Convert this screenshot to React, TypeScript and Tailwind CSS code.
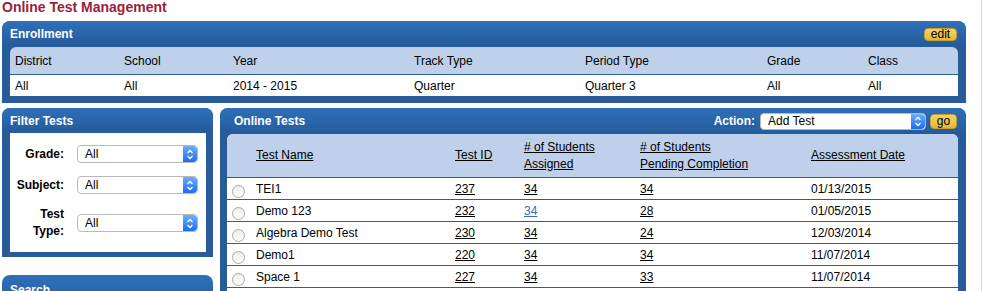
import React from "react";

const ENROLLMENT = [
  { label: "District", value: "All" },
  { label: "School", value: "All" },
  { label: "Year", value: "2014 - 2015" },
  { label: "Track Type", value: "Quarter" },
  { label: "Period Type", value: "Quarter 3" },
  { label: "Grade", value: "All" },
  { label: "Class", value: "All" },
];

const TESTS = [
  { name: "TEI1", id: "237", assigned: "34", pending: "34", date: "01/13/2015" },
  { name: "Demo 123", id: "232", assigned: "34", pending: "28", date: "01/05/2015", visited: true },
  { name: "Algebra Demo Test", id: "230", assigned: "34", pending: "24", date: "12/03/2014" },
  { name: "Demo1", id: "220", assigned: "34", pending: "34", date: "11/07/2014" },
  { name: "Space 1", id: "227", assigned: "34", pending: "33", date: "11/07/2014" },
];

function Stepper() {
  return (
    <div className="flex w-[14px] shrink-0 items-center justify-center rounded-r-[4px] bg-gradient-to-b from-[#6aaefa] to-[#1c6cf0]">
      <svg width="8" height="11" viewBox="0 0 8 11" fill="none">
        <path d="M1.5 4 L4 1.5 L6.5 4" stroke="white" strokeWidth="1.3" />
        <path d="M1.5 7 L4 9.5 L6.5 7" stroke="white" strokeWidth="1.3" />
      </svg>
    </div>
  );
}

function FakeSelect({ value, className }: { value: string; className: string }) {
  return (
    <div className={`flex overflow-hidden rounded-[4px] border border-[#b9b9b9] bg-white ${className}`}>
      <span className="flex flex-1 items-center pl-[7px] text-[12px] leading-none text-black">{value}</span>
      <Stepper />
    </div>
  );
}

function GoldButton({ label, className }: { label: string; className: string }) {
  return (
    <button
      className={`flex items-center justify-center rounded-[4px] border border-[#c99e2b] bg-gradient-to-b from-[#f3d566] to-[#e2b83a] text-[12px] leading-none text-black ${className}`}
    >
      {label}
    </button>
  );
}

function Radio() {
  return (
    <span className="mb-[1px] ml-[5px] block h-[13px] w-[13px] self-end rounded-full border border-[#a9a9a9] bg-gradient-to-b from-[#ededed] to-white" />
  );
}

export default function App() {
  return (
    <div className="min-h-[291px] w-[982px] border-r border-[#d2d2d2] bg-white font-['Liberation_Sans',Arial,sans-serif] text-[12px] text-black">
      <h1 className="h-[21px] pl-[2px] text-[14px] font-bold leading-[14px] text-[#9b1d3c]">
        Online Test Management
      </h1>

      {/* Enrollment */}
      <section className="ml-[2px] w-[964px] overflow-hidden rounded-t-[8px] bg-[#275b9a] pb-[7px]">
        <div className="flex h-[26px] items-center justify-between bg-gradient-to-b from-[#2e70b9] to-[#255a9b] pl-[8px] pr-[9px]">
          <span className="text-[12px] font-bold text-white">Enrollment</span>
          <GoldButton label="edit" className="h-[13px] w-[33px]" />
        </div>
        <div className="mx-[8px] overflow-hidden rounded-t-[6px]">
          <div className="grid h-[28px] grid-cols-[109px_109px_181px_171px_182px_101px_1fr] items-center border-b border-[#2a5d9c] bg-[#bed0ea] pl-[5px]">
            {ENROLLMENT.map((c) => (
              <span key={c.label}>{c.label}</span>
            ))}
          </div>
          <div className="grid h-[21px] grid-cols-[109px_109px_181px_171px_182px_101px_1fr] items-center bg-white pl-[5px]">
            {ENROLLMENT.map((c) => (
              <span key={c.label}>{c.value}</span>
            ))}
          </div>
        </div>
      </section>

      <div className="mt-[5px] flex items-start gap-[7px] pl-[2px]">
        {/* Left column */}
        <div className="w-[211px] shrink-0">
          <section className="overflow-hidden rounded-t-[8px] bg-[#275b9a] pb-[5px]">
            <div className="flex h-[25px] items-center bg-gradient-to-b from-[#2e70b9] to-[#255a9b] pl-[8px]">
              <span className="font-bold text-white">Filter Tests</span>
            </div>
            <div className="ml-[8px] mr-[7px] h-[119px] bg-white pt-[12px]">
              <div className="flex h-[18px] items-center">
                <span className="w-[54px] text-right font-bold">Grade:</span>
                <FakeSelect value="All" className="ml-[13px] h-[18px] w-[121px]" />
              </div>
              <div className="mt-[13px] flex h-[18px] items-center">
                <span className="w-[54px] text-right font-bold">Subject:</span>
                <FakeSelect value="All" className="ml-[13px] h-[18px] w-[121px]" />
              </div>
              <div className="mt-[12px] flex items-center">
                <span className="w-[54px] text-right font-bold leading-[17px]">
                  Test
                  <br />
                  Type:
                </span>
                <FakeSelect value="All" className="ml-[13px] h-[18px] w-[121px]" />
              </div>
            </div>
          </section>

          <section className="mt-[18px] h-[40px] overflow-hidden rounded-t-[8px] bg-gradient-to-b from-[#2e70b9] to-[#255a9b]">
            <div className="flex h-[24px] items-end pl-[8px]">
              <span className="font-bold text-white">Search</span>
            </div>
          </section>
        </div>

        {/* Online Tests */}
        <section className="w-[746px] overflow-hidden rounded-t-[8px] bg-[#275b9a]">
          <div className="flex h-[26px] items-center bg-gradient-to-b from-[#2e70b9] to-[#255a9b] pl-[14px] pr-[9px]">
            <span className="flex-1 font-bold text-white">Online Tests</span>
            <span className="mr-[5px] font-bold text-white">Action:</span>
            <FakeSelect value="Add Test" className="h-[17px] w-[166px]" />
            <GoldButton label="go" className="ml-[4px] h-[15px] w-[27px]" />
          </div>
          <div className="ml-[7px] mr-[8px] overflow-hidden rounded-t-[6px] bg-white">
            <div className="grid h-[44px] grid-cols-[29px_199px_69px_116px_171px_1fr] items-center border-b border-[#2a5d9c] bg-[#bed0ea] leading-[17px]">
              <span />
              <a className="underline">Test Name</a>
              <a className="underline">Test ID</a>
              <a className="underline">
                # of Students
                <br />
                Assigned
              </a>
              <a className="underline">
                # of Students
                <br />
                Pending Completion
              </a>
              <a className="underline">Assessment Date</a>
            </div>
            {TESTS.map((t) => (
              <div
                key={t.id}
                className="grid h-[22px] grid-cols-[29px_199px_69px_116px_171px_1fr] items-center border-b border-[#2a5d9c]"
              >
                <Radio />
                <span>{t.name}</span>
                <a className="underline">{t.id}</a>
                <a className={`underline ${t.visited ? "text-[#3a6cae]" : ""}`}>{t.assigned}</a>
                <a className="underline">{t.pending}</a>
                <span>{t.date}</span>
              </div>
            ))}
            <div className="grid h-[22px] grid-cols-[29px_1fr] items-center">
              <Radio />
            </div>
          </div>
        </section>
      </div>
    </div>
  );
}
